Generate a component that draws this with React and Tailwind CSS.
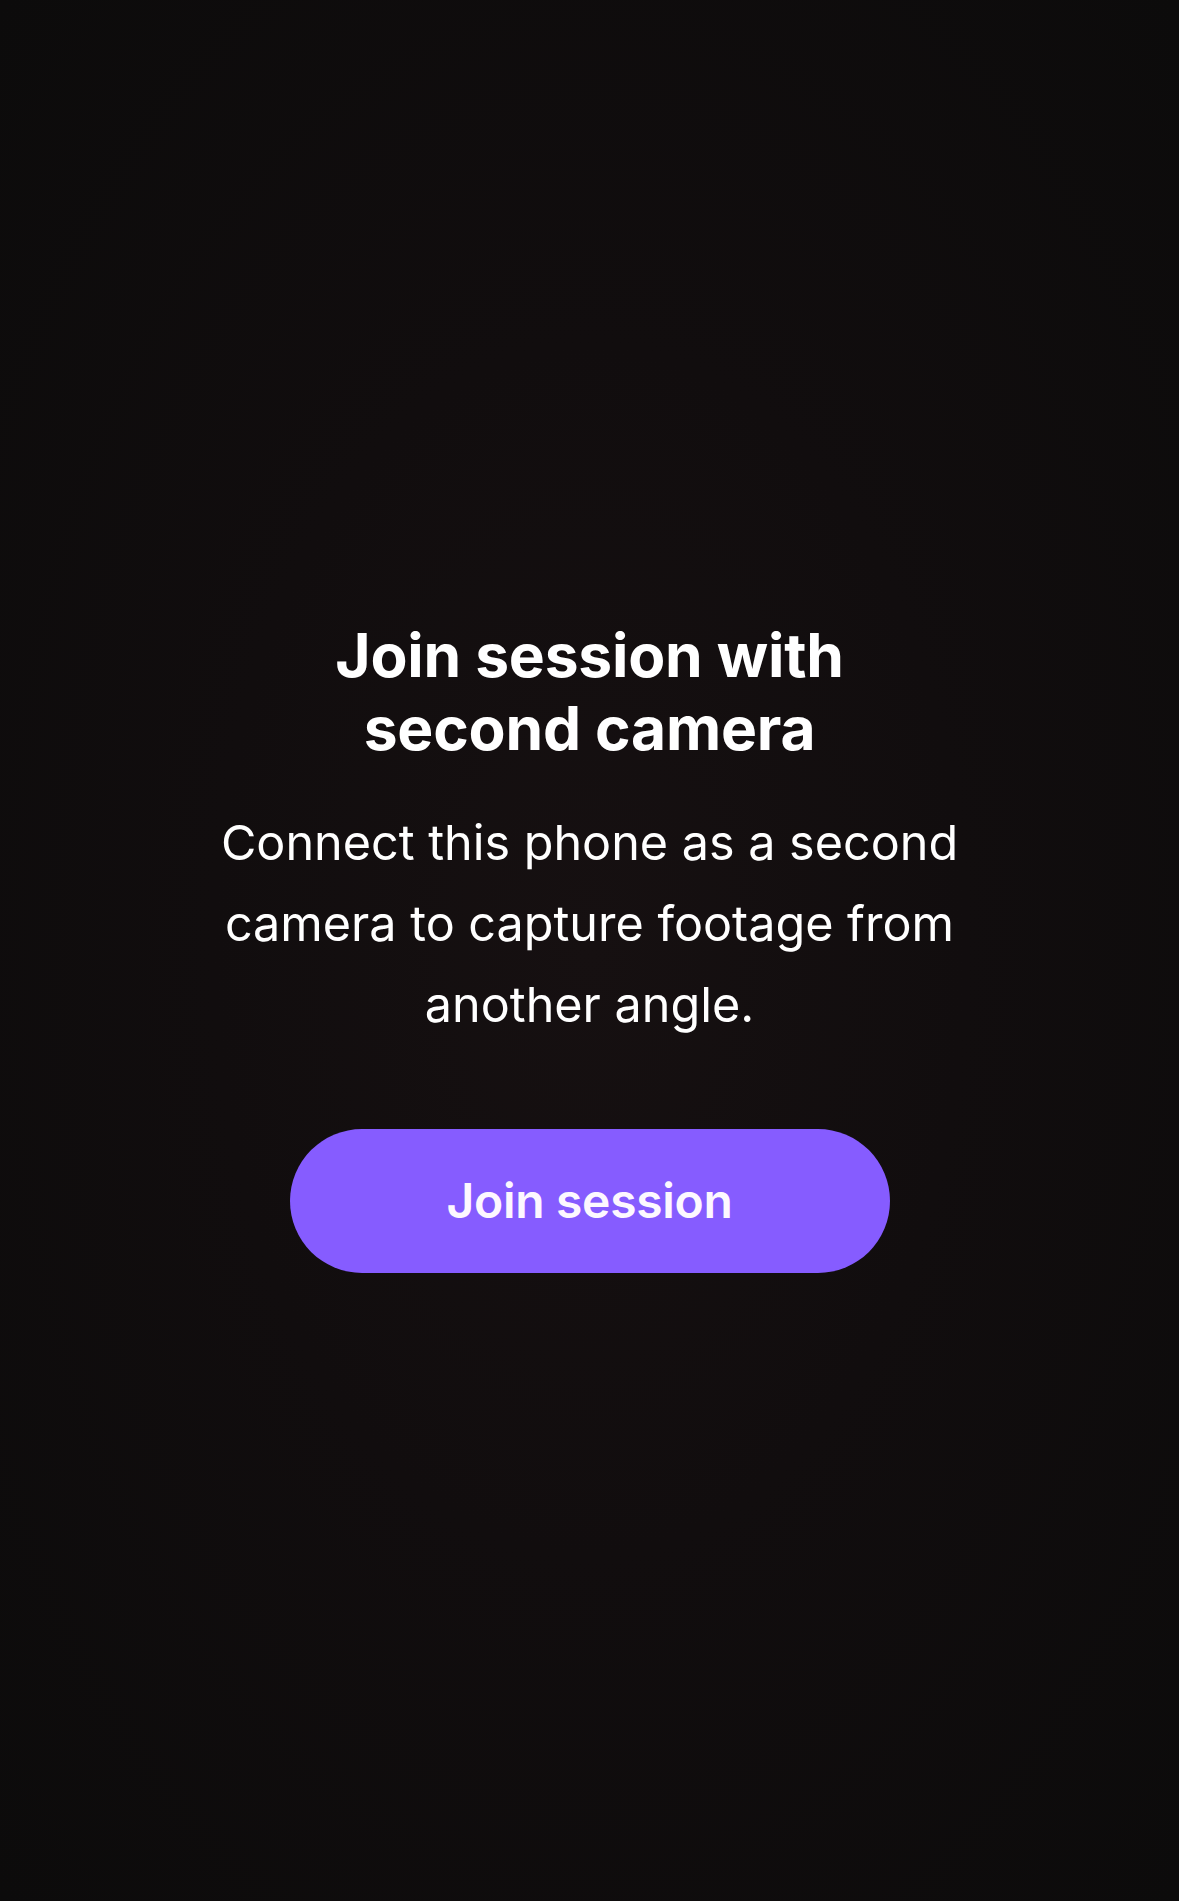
import React from 'react';

export default function App() {
  return (
    <div
      className="min-h-screen w-full flex flex-col items-center justify-center pb-[10px] bg-[#100d0d] bg-[radial-gradient(ellipse_at_center,#161011_0%,#110d0e_45%,#0c0b0b_100%)] text-white"
      style={{ fontFamily: 'Inter, "Noto Sans", sans-serif' }}
    >
      {/* Heading */}
      <h1 className="w-[560px] text-center text-[60.5px] leading-[73px] font-bold tracking-[-0.2px]">
        Join session with second camera
      </h1>

      {/* Description */}
      <p className="mt-[37px] w-[780px] text-center text-[48.5px] leading-[81px] font-normal">
        Connect this phone as a second camera to capture footage from another angle.
      </p>

      {/* CTA */}
      <button className="mt-[84px] w-[600px] h-[144px] rounded-full bg-[#865cff] flex items-center justify-center text-[48px] font-semibold tracking-[-0.3px] text-[#fdf8ff]">
        Join session
      </button>
    </div>
  );
}
